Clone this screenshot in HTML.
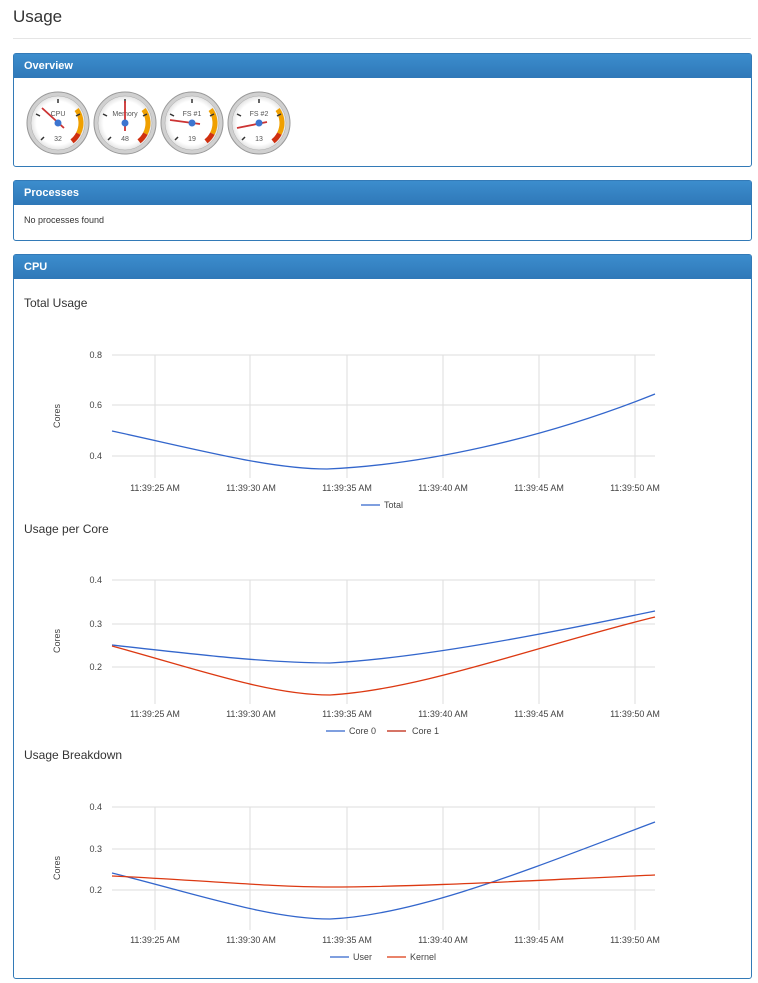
<!DOCTYPE html>
<html><head><meta charset="utf-8"><style>
body{margin:0;background:#fff;font-family:"Liberation Sans",Arial,sans-serif;color:#333;width:758px;height:983px;overflow:hidden;position:relative}
h1{position:absolute;left:13px;top:7px;margin:0;font-size:17px;font-weight:normal}
.hr{position:absolute;left:13px;right:7px;top:38px;border-top:1px solid #e5e5e5}
.panel{position:absolute;left:13px;width:737px;border:1px solid #337ab7;border-radius:3px;background:#fff}
.ph{background:linear-gradient(#3c8dcd,#2f78b8);color:#fff;font-size:11px;font-weight:bold;height:24px;line-height:24px;padding-left:10px}
.small{font-size:9px;padding:10px}
svg text{font-family:"Liberation Sans",Arial,sans-serif}
</style></head><body>
<h1>Usage</h1><div class="hr"></div>
<div class="panel" style="top:53px;height:112px"><div class="ph">Overview</div>
<svg width="300" height="88" style="position:absolute;left:0;top:25px">
<defs>
<radialGradient id="rg"><stop offset="0.8" stop-color="#fff"/><stop offset="1" stop-color="#e4e4e4"/></radialGradient>
<g id="g"><circle r="31" fill="#d0d0d0" stroke="#999" stroke-width="1"/><circle r="27" fill="url(#rg)" stroke="#aaa" stroke-width=".5"/>
<path d="M18.6 -13.5 A23 23 0 0 1 20.4 10.6" stroke="#f0a000" stroke-width="5" fill="none"/>
<path d="M20.4 10.6 A23 23 0 0 1 14 18.3" stroke="#d03010" stroke-width="5" fill="none"/>
<g stroke="#333" stroke-width="1.5"><line x1="0" y1="-24" x2="0" y2="-20"/><line x1="-22" y1="-9" x2="-18" y2="-7"/><line x1="-17" y1="17" x2="-14" y2="14"/><line x1="22" y1="-9" x2="18" y2="-7"/></g>
</g></defs>
<g transform="translate(44,44)"><use href="#g"/><text y="-7" font-size="7" fill="#555" text-anchor="middle">CPU</text><text y="18" font-size="7" fill="#555" text-anchor="middle">32</text><line x1="-16" y1="-15" x2="6" y2="5" stroke="#c33" stroke-width="1.8"/><circle r="3.5" fill="#3c75d0"/></g>
<g transform="translate(111,44)"><use href="#g"/><text y="-7" font-size="7" fill="#555" text-anchor="middle">Memory</text><text y="18" font-size="7" fill="#555" text-anchor="middle">48</text><line x1="0" y1="-22" x2="0" y2="8" stroke="#c33" stroke-width="1.8"/><circle r="3.5" fill="#3c75d0"/></g>
<g transform="translate(178,44)"><use href="#g"/><text y="-7" font-size="7" fill="#555" text-anchor="middle">FS #1</text><text y="18" font-size="7" fill="#555" text-anchor="middle">19</text><line x1="-22" y1="-3" x2="8" y2="1" stroke="#c33" stroke-width="1.8"/><circle r="3.5" fill="#3c75d0"/></g>
<g transform="translate(245,44)"><use href="#g"/><text y="-7" font-size="7" fill="#555" text-anchor="middle">FS #2</text><text y="18" font-size="7" fill="#555" text-anchor="middle">13</text><line x1="-22" y1="5" x2="8" y2="-1" stroke="#c33" stroke-width="1.8"/><circle r="3.5" fill="#3c75d0"/></g>
</svg></div>
<div class="panel" style="top:180px;height:59px"><div class="ph">Processes</div><div class="small">No processes found</div></div>
<div class="panel" style="top:254px;height:723px"><div class="ph">CPU</div></div>
<svg width="758" height="983" style="position:absolute;left:0;top:0" font-size="9" fill="#444">
<g font-size="12" fill="#333"><text x="24" y="307">Total Usage</text><text x="24" y="533">Usage per Core</text><text x="24" y="759">Usage Breakdown</text></g>
<g stroke="#ddd" stroke-width="1">
<line x1="112" x2="655" y1="355" y2="355"/><line x1="112" x2="655" y1="405" y2="405"/><line x1="112" x2="655" y1="456" y2="456"/>
<line x1="112" x2="655" y1="580" y2="580"/><line x1="112" x2="655" y1="624" y2="624"/><line x1="112" x2="655" y1="667" y2="667"/>
<line x1="112" x2="655" y1="807" y2="807"/><line x1="112" x2="655" y1="849" y2="849"/><line x1="112" x2="655" y1="890" y2="890"/>
<path d="M155 355V478M250 355V478M347 355V478M443 355V478M539 355V478M635 355V478"/>
<path d="M155 580V704M250 580V704M347 580V704M443 580V704M539 580V704M635 580V704"/>
<path d="M155 807V930M250 807V930M347 807V930M443 807V930M539 807V930M635 807V930"/>
</g>
<g text-anchor="end"><text x="102" y="358">0.8</text><text x="102" y="408">0.6</text><text x="102" y="459">0.4</text>
<text x="102" y="583">0.4</text><text x="102" y="627">0.3</text><text x="102" y="670">0.2</text>
<text x="102" y="810">0.4</text><text x="102" y="852">0.3</text><text x="102" y="893">0.2</text></g>
<g text-anchor="middle">
<g><text x="155" y="491">11:39:25 AM</text><text x="251" y="491">11:39:30 AM</text><text x="347" y="491">11:39:35 AM</text><text x="443" y="491">11:39:40 AM</text><text x="539" y="491">11:39:45 AM</text><text x="635" y="491">11:39:50 AM</text></g>
<g><text x="155" y="717">11:39:25 AM</text><text x="251" y="717">11:39:30 AM</text><text x="347" y="717">11:39:35 AM</text><text x="443" y="717">11:39:40 AM</text><text x="539" y="717">11:39:45 AM</text><text x="635" y="717">11:39:50 AM</text></g>
<g><text x="155" y="943">11:39:25 AM</text><text x="251" y="943">11:39:30 AM</text><text x="347" y="943">11:39:35 AM</text><text x="443" y="943">11:39:40 AM</text><text x="539" y="943">11:39:45 AM</text><text x="635" y="943">11:39:50 AM</text></g>
<text transform="translate(60,416) rotate(-90)">Cores</text><text transform="translate(60,641) rotate(-90)">Cores</text><text transform="translate(60,868) rotate(-90)">Cores</text>
</g>
<g fill="none" stroke-width="1.3">
<path d="M112 431 C200 450 270 469 327 469 C420 465 540 440 655 394" stroke="#3366cc"/>
<path d="M112 645 C200 655 270 663 330 663 C420 658 540 635 655 611" stroke="#3366cc"/>
<path d="M112 646 C200 670 270 695 330 695 C420 690 540 645 655 617" stroke="#dc3912"/>
<path d="M112 873 C200 895 270 919 330 919 C420 915 540 865 655 822" stroke="#3366cc"/>
<path d="M112 876 C200 880 270 887 330 887 C420 887 540 880 655 875" stroke="#dc3912"/>
<path d="M361 505H380" stroke="#3366cc"/>
<path d="M326 731H345M387 731H406" stroke="#3366cc"/><path d="M387 731H406" stroke="#dc3912"/>
<path d="M330 957H349" stroke="#3366cc"/><path d="M387 957H406" stroke="#dc3912"/>
</g>
<text x="384" y="508">Total</text><text x="349" y="734">Core 0</text><text x="412" y="734">Core 1</text>
<text x="353" y="960">User</text><text x="410" y="960">Kernel</text>
</svg>
</body></html>
